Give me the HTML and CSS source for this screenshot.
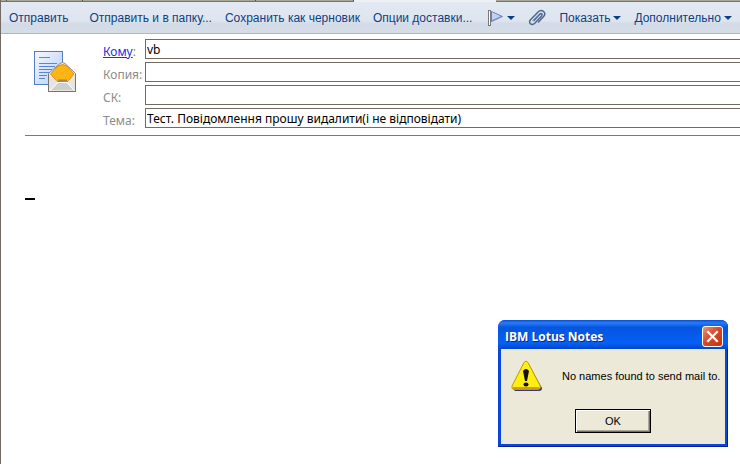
FILE: index.html
```html
<!DOCTYPE html>
<html lang="ru">
<head>
    <meta charset="UTF-8">
    <meta name="viewport" content="width=device-width, initial-scale=1.0">
    <title>IBM Lotus Notes</title>
    <link rel="stylesheet" href="styles.css">
</head>
<body>
    <div class="tabs">
        <span class="tab tab-edge"></span>
        <span class="tab"></span>
        <span class="tab tab-wide"></span>
        <span class="tab tab-short"></span>
        <span class="tab tab-active"></span>
        <span class="tab tab-rest"></span>
    </div>

    <div class="toolbar">
        <button type="button" class="tool tool-send">Отправить</button>
        <button type="button" class="tool">Отправить и в папку...</button>
        <button type="button" class="tool">Сохранить как черновик</button>
        <button type="button" class="tool">Опции доставки...</button>
        <button type="button" class="tool tool-flag" aria-label="Флаг">
            <svg width="16" height="18" viewBox="0 0 16 18">
                <path d="M3.5 2.5 L14.5 7.5 L3.5 12.5 Z" fill="#c3d0f2" stroke="#6780bd"/>
                <path d="M4 11.5 L13 7.5" stroke="#8296cc" fill="none"/>
                <rect x="0.5" y="1.5" width="2" height="15" fill="#fff" stroke="#77777c"/>
            </svg>
            <span class="arrow"></span>
        </button>
        <button type="button" class="tool" aria-label="Вложение">
            <svg width="18" height="18" viewBox="0 0 18 18" fill="none" stroke="#4f6690" stroke-width="1.5" stroke-linecap="round">
                <path d="M6 11.5 L11.5 5.5 C13.3 3.7 15 5.2 13.5 7 L7 14 C3.8 17.2 -0.3 14 2.5 10.7 L10.3 2.8 C13.5 -0.2 18.8 3 15.8 7.3 L10.5 13"/>
                <path d="M4.5 11.5 L11 4.7" stroke="#93a5c6" stroke-width="1"/>
            </svg>
        </button>
        <button type="button" class="tool">Показать<span class="arrow"></span></button>
        <button type="button" class="tool">Дополнительно<span class="arrow"></span></button>
    </div>

    <main class="memo">
        <form class="header">
            <svg class="memo-icon" width="44" height="44" viewBox="0 0 44 44">
                <defs>
                    <linearGradient id="paper" x1="0" y1="0" x2="1" y2="1">
                        <stop offset="0" stop-color="#f4f8ff"/>
                        <stop offset="1" stop-color="#b4cdf8"/>
                    </linearGradient>
                </defs>
                <rect x="0.5" y="1.5" width="28" height="33" fill="url(#paper)" stroke="#537bc8"/>
                <path d="M5 7.5h11M5 13.5h18M5 16.5h16M5 19.5h13M5 22.5h11M5 25.5h8M5 28.5h6" stroke="#5985d2" fill="none"/>
                <path d="M14.5 23.5 L26 13.5 Q28.5 11.5 31 13.5 L41.5 23.5 V41.5 H14.5 Z" fill="#f4f4f2" stroke="#8d877c"/>
                <path d="M16.5 24 L24 16 Q28.5 13 33 16 L40 24 L34 31.5 H23 Z" fill="#fcb514" stroke="#d88f0b"/>
                <path d="M24 30.5h9" stroke="#a88548" stroke-width="2"/>
                <path d="M15 24.5 L23.5 32.5 L15 41 Z" fill="#e4e4e1"/>
                <path d="M41 24.5 L33.5 32.5 L41 41 Z" fill="#e4e4e1"/>
                <path d="M15.5 41 L24 32.5 H33 L41 41 Z" fill="#cfcfcc" stroke="#fff"/>
                <path d="M14.5 24 V41.5 H41.5 V24" stroke="#77736c" fill="none"/>
            </svg>
            <div class="fields">
                <label for="to"><a href="#to">Кому</a>:</label>
                <input type="text" id="to" value="vb">
                <label for="copy">Копия:</label>
                <input type="text" id="copy">
                <label for="bcc">СК:</label>
                <input type="text" id="bcc">
                <label for="subject">Тема:</label>
                <input type="text" id="subject" value="Тест. Повідомлення прошу видалити(і не відповідати)">
            </div>
        </form>
        <div class="body-text"><span class="caret"></span></div>
    </main>

    <div class="dialog" role="alertdialog" aria-labelledby="dialogTitle">
        <div class="title-bar">
            <h1 id="dialogTitle">IBM Lotus Notes</h1>
            <button type="button" class="close" aria-label="Close">
                <svg width="15" height="15" viewBox="0 0 13 13">
                    <path d="M2 2 L11 11 M11 2 L2 11" stroke="#fff" stroke-width="2"/>
                </svg>
            </button>
        </div>
        <div class="dialog-body">
            <div class="message">
                <svg width="32" height="32" viewBox="0 0 32 32">
                    <path d="M17 3 L31 28 Q31 31 28 31 H4 L2 29 Z" fill="#3b3a78"/>
                    <path d="M13 2.5 Q15 -0.5 17 2.5 L29.3 26 Q30 29 27 29.5 H3 Q0.2 29 1 26 Z" fill="#ffee12" stroke="#b99a10"/>
                    <path d="M2 28 H28" stroke="#d29b12" stroke-width="2"/>
                    <path d="M12 11 Q15 7 18 11 L16 21 H14 Z" fill="#111"/>
                    <ellipse cx="15" cy="24.5" rx="2.5" ry="2" fill="#111"/>
                </svg>
                <p>No names found to send mail to.</p>
            </div>
            <button type="button" class="ok">OK</button>
        </div>
    </div>
</body>
</html>
```
FILE: styles.css
```css
* {
    box-sizing: border-box;
}
body {
    margin: 0;
    min-height: 100vh;
    background: #fff;
    border-left: 1px solid #736a61;
    font-family: "Liberation Sans", Arial, sans-serif;
    font-size: 12px;
    color: #000;
}
.tabs {
    display: flex;
    height: 2px;
    border-bottom: 1px solid #77736a;
    background: #a9a796;
}
.tab {
    width: 76px;
    border-right: 1px solid #55524a;
}
.tab-edge {
    width: 6px;
}
.tab-wide {
    width: 173px;
}
.tab-short {
    width: 98px;
}
.tab-active {
    width: 142px;
    height: 2px;
    border: 0;
    background: #eef0f4;
}
.tab-rest {
    flex: 1;
    border: 0;
}
.toolbar {
    display: flex;
    align-items: center;
    gap: 13px;
    height: 32px;
    padding-left: 8px;
    background: linear-gradient(#e3e9f2, #dfe5ee 60%, #d3dbe7 70%, #d6dde8);
    border-bottom: 1px solid #a3b8d2;
}
.tool {
    display: flex;
    align-items: center;
    flex: none;
    gap: 3px;
    padding: 0;
    border: 0;
    background: none;
    font: inherit;
    color: #0b4184;
    white-space: nowrap;
}
.tool-send {
    margin-right: 8px;
}
.tool-flag {
    padding-left: 3px;
}
.arrow {
    border: 4px solid transparent;
    border-top-color: #0b4184;
    border-bottom: 0;
}
.memo {
    padding: 5px 0 0 24px;
}
.header {
    display: flex;
    padding: 0 0 7px 8px;
    border-bottom: 1px solid #687c99;
}
.memo-icon {
    flex: none;
    margin: 11px 25px 0 1px;
}
.fields {
    flex: 1;
    display: grid;
    grid-template-columns: 42px 1fr;
    gap: 3px 0;
}
.fields label {
    font-family: "Noto Sans", sans-serif;
    font-size: 12px;
    line-height: 15px;
    padding-top: 5px;
    color: #8c8c8c;
    white-space: nowrap;
}
.fields a {
    color: #2b2be0;
}
.fields input {
    width: 100%;
    height: 20px;
    padding: 0 1px;
    border: 1px solid #736a61;
    border-right: 0;
    background: #fff;
    font-family: "Noto Sans", sans-serif;
    font-size: 12px;
    color: #000;
}
.body-text {
    padding-top: 62px;
}
.caret {
    display: block;
    width: 10px;
    height: 2px;
    background: #000;
}
.dialog {
    position: absolute;
    right: 12px;
    bottom: 17px;
    width: 230px;
    padding: 0 3px 3px;
    border-radius: 7px 7px 0 0;
    background: #0a46dc;
    box-shadow: inset -1px -1px #001ea0;
}
.title-bar {
    display: flex;
    align-items: center;
    justify-content: space-between;
    height: 29px;
    margin: 0 -3px;
    padding: 3px 5px 0 7px;
    border-radius: 7px 7px 0 0;
    background: linear-gradient(#0a4fd0, #2a7bf5 10%, #0555e0 25%, #0560f5 80%, #0346c8);
}
.title-bar h1 {
    margin: 0;
    font-family: "Open Sans", sans-serif;
    font-size: 12px;
    color: #fff;
    text-shadow: 1px 1px #0a2a80;
}
.close {
    display: flex;
    align-items: center;
    justify-content: center;
    width: 21px;
    height: 21px;
    padding: 0;
    border: 1px solid #fff;
    border-radius: 3px;
    background: linear-gradient(135deg, #e8977c, #d8492a 45%, #c2330f);
}
.close svg {
    flex: none;
}
.dialog-body {
    padding: 11px 10px;
    background: #ece9d8;
    text-align: center;
}
.message {
    display: flex;
    align-items: center;
    gap: 19px;
    text-align: left;
}
.message svg {
    flex: none;
}
.message p {
    margin: 0;
    font-family: "Liberation Sans", Tahoma, sans-serif;
    font-size: 11px;
    white-space: nowrap;
}
.ok {
    width: 76px;
    height: 24px;
    margin-top: 17px;
    padding: 0;
    border: 1px solid #000;
    background: #ece9d8;
    box-shadow: inset 1px 1px #fff, inset -1px -1px #716f64, inset -2px -2px #aca899;
    font-family: inherit;
    font-size: 11px;
    color: #000;
}
```
